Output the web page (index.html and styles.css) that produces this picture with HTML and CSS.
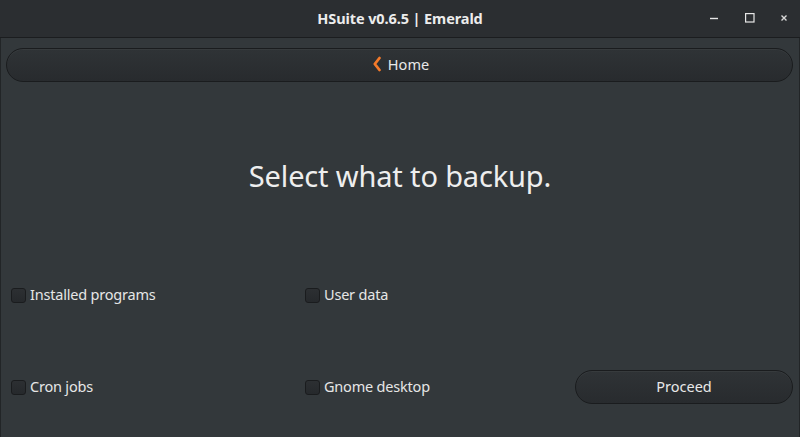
FILE: index.html
```html
<!DOCTYPE html>
<html>
<head>
<meta charset="utf-8">
<link rel="stylesheet" href="styles.css">
</head>
<body>
<div class="window">
  <header class="titlebar">
    <div class="title">HSuite v0.6.5 | Emerald</div>
    <div class="controls">
      <svg class="ctl min" width="12" height="12" viewBox="0 0 12 12"><path d="M2 6.5h8" stroke="#e6e6e6" stroke-width="1.4"/></svg>
      <svg class="ctl max" width="12" height="12" viewBox="0 0 12 12"><rect x="1.6" y="1.6" width="8.4" height="8.4" fill="none" stroke="#e6e6e6" stroke-width="1.2"/></svg>
      <svg class="ctl" width="12" height="12" viewBox="0 0 12 12"><path d="M3.5 3.5l5 5M8.5 3.5l-5 5" stroke="#d8d8d8" stroke-width="1.4"/></svg>
    </div>
  </header>
  <main class="content">
    <button class="btn home">
      <svg width="10" height="16" viewBox="0 0 10 16"><path d="M7.5 2L2.8 8l4.7 6" fill="none" stroke="#f47a2a" stroke-width="2.8" stroke-linecap="round" stroke-linejoin="round"/></svg>
      <span>Home</span>
    </button>
    <h1 class="heading">Select what to backup.</h1>
    <div class="options">
      <label class="check"><span class="box"></span><span class="lbl">Installed programs</span></label>
      <label class="check"><span class="box"></span><span class="lbl">User data</span></label>
      <div></div>
      <label class="check"><span class="box"></span><span class="lbl">Cron jobs</span></label>
      <label class="check"><span class="box"></span><span class="lbl">Gnome desktop</span></label>
      <button class="btn proceed"><span class="lbl">Proceed</span></button>
    </div>
  </main>
</div>
</body>
</html>
```
FILE: styles.css
```css
html, body {
  margin: 0;
  padding: 0;
  background: #33383b;
}
body {
  font-family: "Noto Sans", "Open Sans", sans-serif;
  color: #e8e8e8;
  width: 800px;
  height: 437px;
  overflow: hidden;
}
.window {
  height: 437px;
  display: flex;
  flex-direction: column;
}
.titlebar {
  height: 37px;
  flex: none;
  background: #2b2e31;
  border-bottom: 1px solid #1b1d1f;
  position: relative;
  display: flex;
  align-items: center;
  justify-content: center;
}
.title {
  font-weight: bold;
  font-size: 14.5px;
  color: #ececec;
  letter-spacing: -0.1px;
  margin-top: -1px;
}
.controls {
  position: absolute;
  right: 10px;
  top: 12px;
  display: flex;
  gap: 22px;
}
.ctl { display: block; }
.ctl.min { margin-right: 2px; }
.content {
  flex: 1;
  padding: 10px 6px 0 6px;
  border-left: 1px solid #222527;
  border-right: 1px solid #222527;
  display: flex;
  flex-direction: column;
}
.btn {
  font-family: inherit;
  font-size: 14.5px;
  color: #e8e8e8;
  background: linear-gradient(#2f3336, #282b2e);
  border: 1px solid #1a1c1e;
  border-radius: 17px;
  box-shadow: inset 0 1px 0 rgba(255,255,255,0.04);
  height: 34px;
  display: flex;
  align-items: center;
  justify-content: center;
  gap: 6px;
  padding: 0;
  margin: 0;
}
.home {
  margin-left: -1px;
  width: calc(100% + 1px);
}
.home svg { margin-top: -2px; margin-left: 2px; }
.home span { margin-top: -2px; }
.heading {
  margin: 74px 0 0 0;
  height: 40px;
  line-height: 40px;
  font-weight: normal;
  font-size: 29px;
  text-align: center;
  color: #eeeeee;
  letter-spacing: -0.15px;
}
.options {
  margin-top: 82px;
  display: grid;
  grid-template-columns: 294px 270px 1fr;
  grid-template-rows: 34px 34px;
  row-gap: 58px;
  padding-left: 4px;
}
.check {
  display: flex;
  align-items: center;
  gap: 4px;
  font-size: 14.5px;
  color: #e6e6e6;
  letter-spacing: -0.2px;
}
.lbl { margin-top: -2px; }
.box {
  width: 13px;
  height: 13px;
  border: 1px solid #1a1c1e;
  border-radius: 3px;
  background: linear-gradient(#2c2f32, #26292c);
  flex: none;
}
.proceed {
  width: 100%;
}
```
